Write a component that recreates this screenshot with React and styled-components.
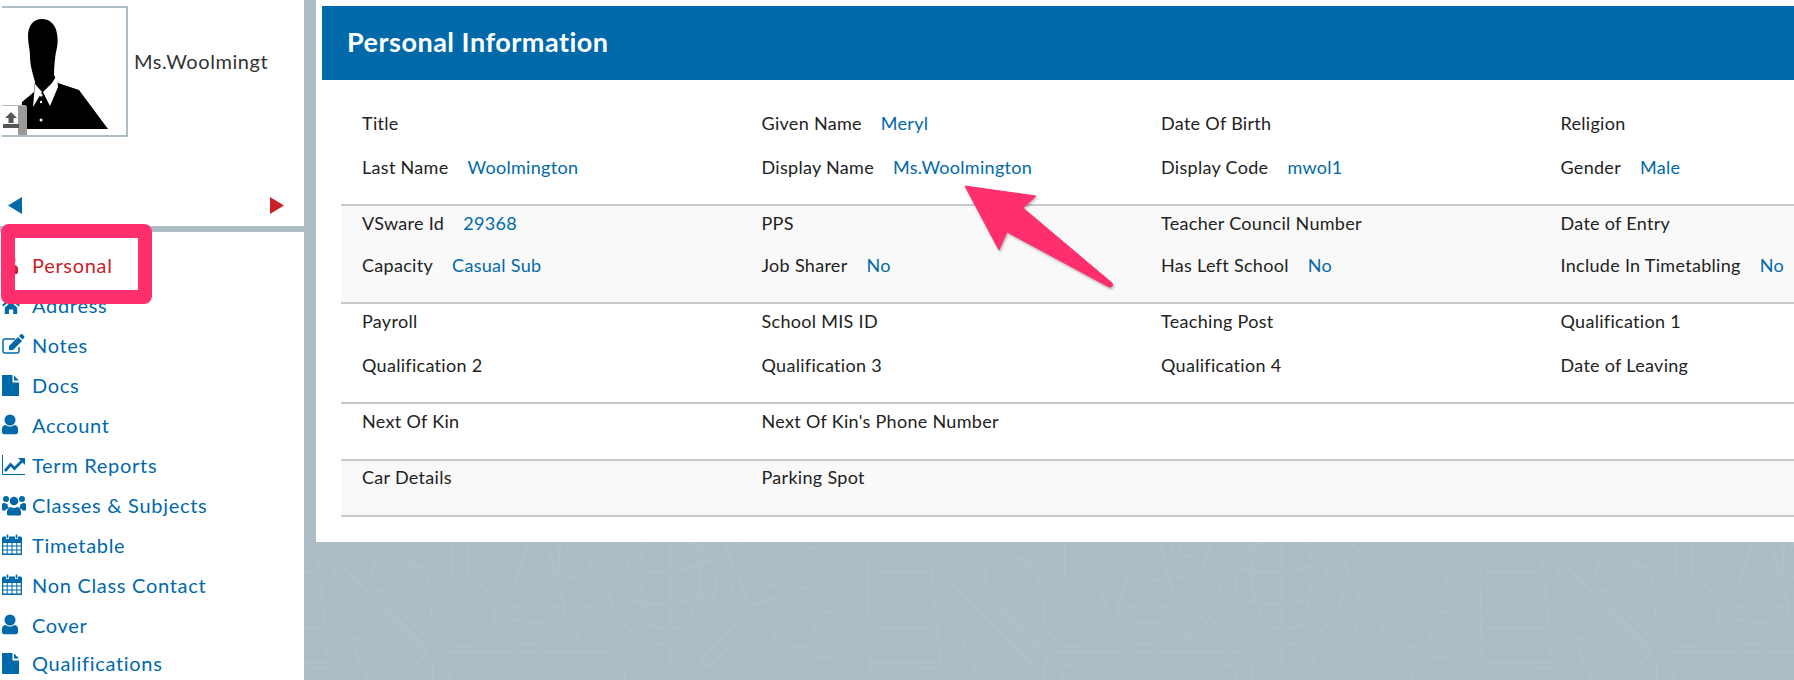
import React from 'react';
import styled, { createGlobalStyle } from 'styled-components';

const BLUE = '#0069aa';
const RED = '#cc2027';
const PINK = '#ff2e6c';
const SLATE = '#aebdc5';

// faint school doodles behind the page, one tile is 612px wide
const doodles = `
<svg xmlns='http://www.w3.org/2000/svg' width='612' height='680'>
<g transform='translate(-240 0)' fill='none' stroke='#fff' stroke-opacity='.04' stroke-width='2' stroke-linejoin='round'>
<path d='M256 557L318 557L329 668L258 670Z M262 572H318 M262 586H320 M262 600H321 M262 614H322 M262 628H323 M262 642H325 M258 663H328'/>
<path d='M333 570L344 568L426 652L418 664L340 584Z M340 584L420 664 M350 576L428 654'/>
<path d='M390 610L396 606L428 638L424 646Z'/>
<path d='M350 640L357 637L385 680H368Z'/>
<path d='M378 555C370 570 372 585 378 592H424C432 588 428 574 418 566C408 556 392 552 378 555Z M378 592L410 570 M425 560A7 7 0 1 0 425 561'/>
<path d='M431 613a32 34 0 1 0 64 0a32 34 0 1 0-64 0Z M453 540V580 M468 540V580 M448 603h6 M470 601a4 4 0 1 0 8 0a4 4 0 1 0-8 0'/>
<path d='M530 540L506 605Q504 619 520 621Q535 624 552 621Q566 619 564 605L547 540 M509 608Q535 602 562 608 M538 572h8 M540 580h8 M540 592h8'/>
<path d='M560 540L558 570Q560 578 575 578L590 568L600 540 M570 540L566 555L580 556'/>
<path d='M582 608L588 606L622 646L616 650Z M562 630a8 3 30 1 0 16 8a8 3 30 1 0-16-8'/>
<path d='M624 583a46 46 0 1 0 92 0a46 46 0 1 0-92 0Z M608 583a62 62 0 0 0 62 62a62 62 0 0 0 62-62 M645 543C635 570 640 600 655 628 M695 543C705 570 700 600 685 628 M628 568Q670 580 712 560 M630 600Q670 610 712 594 M670 537V630 M670 645V665 M650 680Q670 655 690 680'/>
<path d='M737 540L785 595L750 606L725 545 M745 558l6 3 M757 565l6 3 M755 578l6 3 M768 584l6 3'/>
<path d='M700 660L738 622L746 628L708 668Z M715 680L745 640L750 646L730 680Z'/>
<path d='M770 625C775 610 800 608 812 622L820 640C810 648 790 650 776 640Z M800 680C795 665 820 650 840 660C860 670 860 680 860 680'/>
<path d='M808 555C804 548 812 545 816 550L834 576C838 584 830 586 826 582Z M798 594C796 588 804 586 808 589L836 606C840 612 832 614 826 612Z'/>
<path d='M433 680V665Q433 652 450 652H620Q640 652 640 668V680 M450 680V672Q450 664 462 664H610Q625 664 625 676V680 M516 652V644H542V652'/>
</g></svg>`;

const GlobalStyle = createGlobalStyle`
  html, body {
    margin: 0;
    padding: 0;
    height: 680px;
    overflow: hidden;
    background: ${SLATE};
  }
  body {
    font-family: "Lato", "Open Sans", sans-serif;
  }
`;

const Page = styled.div`
  position: relative;
  display: flex;
  align-items: flex-start;
  width: 1794px;
  height: 680px;
  overflow: hidden;
  background-color: ${SLATE};
  background-image: url("data:image/svg+xml,${encodeURIComponent(doodles)}");
  background-position: 240px 0;
  background-repeat: repeat-x;
`;

const Sidebar = styled.aside`
  flex: none;
  width: 304px;
  height: 680px;
  overflow: hidden;
  background: #fff;
`;

const Profile = styled.div`
  display: flex;
  align-items: center;
  padding: 6px 0 0 2px;
`;

const Avatar = styled.div`
  position: relative;
  flex: none;
  width: 124px;
  height: 127px;
  border: 2px solid ${SLATE};
  border-left: none;
`;

const UploadButton = styled.div`
  position: absolute;
  left: 0;
  bottom: 0;
  width: 25px;
  height: 29px;
  display: flex;
  align-items: center;
  border-top: 1px solid ${SLATE};
  border-top-right-radius: 3px;
  background: linear-gradient(to right, #fff 0 16px, #9a9a9a 16px);
`;

const ProfileName = styled.span`
  margin: 0 0 22px 6px;
  font-size: 20px;
  letter-spacing: 0.55px;
  color: #333;
  white-space: nowrap;
`;

const Pager = styled.div`
  display: flex;
  justify-content: space-between;
  padding: 60px 20px 0 8px;
  height: 17px;
`;

const SideRule = styled.div`
  height: 6px;
  margin-top: 12px;
  background: ${SLATE};
`;

const Nav = styled.nav`
  padding-top: 13px;
`;

const NavItem = styled.a`
  display: flex;
  align-items: center;
  height: 40px;
  padding-left: 2px;
  margin-top: ${(p) => (p.$last ? '-2px' : '0')};
  font-size: 20px;
  letter-spacing: 0.7px;
  color: ${(p) => (p.$active ? RED : BLUE)};
  white-space: nowrap;
  svg {
    flex: none;
    width: 24px;
    height: 24px;
    margin-right: 6px;
    fill: currentColor;
  }
`;

const Panel = styled.main`
  flex: none;
  width: 1478px;
  margin-left: 12px;
  padding: 6px 0 25px 6px;
  background: #fff;
`;

const PanelHeader = styled.header`
  display: flex;
  align-items: center;
  box-sizing: border-box;
  height: 74px;
  padding: 0 0 3px 25px;
  background: ${BLUE};
  color: #fff;
  font-size: 27px;
  font-weight: 700;
  letter-spacing: 0.5px;
`;

const Rows = styled.div`
  margin-left: 19px;
  width: 1600px;
`;

const Row = styled.section`
  display: grid;
  grid-template-columns: repeat(4, 399.5px);
  grid-auto-rows: ${(p) => p.$line}px;
  align-content: start;
  box-sizing: border-box;
  height: ${(p) => p.$height}px;
  padding-top: ${(p) => p.$pad}px;
  background: ${(p) => (p.$shade ? '#f9f9f9' : '#fff')};
  border-bottom: 2px solid #c9c9c9;
`;

const Field = styled.div`
  padding-left: 21px;
  font-size: 18px;
  line-height: 24px;
  letter-spacing: 0.3px;
  color: #222;
  white-space: nowrap;
`;

const Value = styled.span`
  margin-left: 19px;
  color: ${BLUE};
`;

const Highlight = styled.div`
  position: absolute;
  left: 1px;
  top: 224px;
  box-sizing: border-box;
  width: 151px;
  height: 80px;
  border: 14px solid ${PINK};
  border-radius: 8px;
`;

const Pointer = styled.svg`
  position: absolute;
  left: 960px;
  top: 180px;
  width: 160px;
  height: 112px;
  overflow: visible;
  filter: drop-shadow(1px 2px 1px rgba(0, 0, 0, 0.25));
`;

const navIcons = {
  user: (
    <svg viewBox="0 0 24 24">
      <circle cx="8" cy="7" r="5.5" />
      <path d="M0 16c0-3 2-4 4-4 1 1 2.400 1.600 4 1.600S11 13 12 12c2 0 4 1 4 4v3c0 1.500-1 2.200-2.200 2.200H2.200C1 21.200 0 20.500 0 19z" />
    </svg>
  ),
  home: (
    <svg viewBox="0 0 24 24">
      <path d="M9 4L0 12l1.300 1.500L9 6.800l7.700 6.700L18 12l-3.500-3V4.500h-2.800v2z" />
      <path d="M2.800 14.500L9 9l6.200 5.500V21h-4v-4.500H7V21H2.800z" />
    </svg>
  ),
  edit: (
    <svg viewBox="0 0 24 24">
      <path fill="none" stroke="currentColor" strokeWidth="1.500" d="M13 6H3.500A2 2 0 0 0 1 8v10a2 2 0 0 0 2 2h12a2 2 0 0 0 2-2v-4" />
      <path d="M7 13L16 4l4 4-9 9H7z" />
      <path d="M17 3l1.500-1.500c.6-.5 1.400-.5 2 0l1.500 1.500c.5.6.5 1.400 0 2L20.500 6.500z" />
    </svg>
  ),
  file: (
    <svg viewBox="0 0 24 24">
      <path d="M0 2h10.500v7.500H17v13.500H1a1 1 0 0 1-1-1z" />
      <path d="M12 2.500l5 5h-5z" />
    </svg>
  ),
  chart: (
    <svg viewBox="0 0 24 24">
      <path fill="none" stroke="currentColor" strokeWidth="1" d="M.5 2v19.500H23" />
      <path fill="none" stroke="currentColor" strokeWidth="2.800" d="M3 18l5.500-6.500 4 4L20 8" />
      <path d="M16 5h7v7z" />
    </svg>
  ),
  users: (
    <svg viewBox="0 0 24 24">
      <circle cx="4" cy="6" r="3" />
      <circle cx="20" cy="6" r="3" />
      <circle cx="12" cy="8" r="4.300" />
      <path d="M0 11.500C0 10 1.500 10 3 10c.8.800 1.500 1 2.500 1 0 2 .6 3 1.500 4-2 .6-3 1.500-3.500 2.500H1c-.6 0-1-.4-1-1z" />
      <path d="M24 11.500c0-1.500-1.500-1.500-3-1.500-.8.800-1.500 1-2.500 1 0 2-.6 3-1.500 4 2 .6 3 1.500 3.500 2.500H23c.6 0 1-.4 1-1z" />
      <path d="M5 19c0-3 2.500-5 4-5 1.500 1.300 4.500 1.300 6 0 1.500 0 4 2 4 5v2c0 1-1 1.500-2 1.500H7c-1 0-2-.5-2-1.500z" />
    </svg>
  ),
  calendar: (
    <svg viewBox="0 0 24 24">
      <path d="M0 5a1.500 1.500 0 0 1 1.500-1.500H4v2.500h3V3.500h6v2.500h3V3.500h2.500A1.500 1.500 0 0 1 20 5v17H0zm1.300 5v2.500h3.400V10zm4.400 0v2.500h3.800V10zm4.800 0v2.500h3.800V10zm4.800 0v2.500h3.400V10zM1.300 13.500v3h3.400v-3zm4.400 0v3h3.800v-3zm4.800 0v3h3.800v-3zm4.800 0v3h3.400v-3zM1.300 17.500v3h3.400v-3zm4.400 0v3h3.800v-3zm4.800 0v3h3.800v-3zm4.800 0v3h3.400v-3z" />
      <path d="M4.700 1.500h1.600v3.800H4.700zM13.700 1.500h1.600v3.800h-1.600z" />
    </svg>
  ),
};

const navItems = [
  { label: 'Personal', icon: 'user', active: true },
  { label: 'Address', icon: 'home' },
  { label: 'Notes', icon: 'edit' },
  { label: 'Docs', icon: 'file' },
  { label: 'Account', icon: 'user' },
  { label: 'Term Reports', icon: 'chart' },
  { label: 'Classes & Subjects', icon: 'users' },
  { label: 'Timetable', icon: 'calendar' },
  { label: 'Non Class Contact', icon: 'calendar' },
  { label: 'Cover', icon: 'user' },
  { label: 'Qualifications', icon: 'file', last: true },
];

const rows = [
  {
    height: 126,
    pad: 31,
    line: 44,
    fields: [
      ['Title'], ['Given Name', 'Meryl'], ['Date Of Birth'], ['Religion'],
      ['Last Name', 'Woolmington'], ['Display Name', 'Ms.Woolmington'], ['Display Code', 'mwol1'], ['Gender', 'Male'],
    ],
  },
  {
    height: 98,
    pad: 5,
    line: 42,
    shade: true,
    fields: [
      ['VSware Id', '29368'], ['PPS'], ['Teacher Council Number'], ['Date of Entry'],
      ['Capacity', 'Casual Sub'], ['Job Sharer', 'No'], ['Has Left School', 'No'], ['Include In Timetabling', 'No'],
    ],
  },
  {
    height: 100,
    pad: 5,
    line: 44,
    fields: [
      ['Payroll'], ['School MIS ID'], ['Teaching Post'], ['Qualification 1'],
      ['Qualification 2'], ['Qualification 3'], ['Qualification 4'], ['Date of Leaving'],
    ],
  },
  { height: 57, pad: 5, line: 44, fields: [['Next Of Kin'], ["Next Of Kin's Phone Number"]] },
  { height: 56, pad: 4, line: 44, shade: true, fields: [['Car Details'], ['Parking Spot']] },
];

const Silhouette = () => (
  <svg width="124" height="127" viewBox="2 8 124 127">
    <path
      fill="#000"
      d="M42 19C33 19 28 26 28 36c0 8 2 14 2 20 0 10 3 18 5 26l-1 10-12 10-2 24v3h88L79 90l-21-7-4-8c0-9 1-17 2-23 2-8 2-12 1-18-1-9-7-15-15-15z"
    />
    <path fill="#fff" d="M57 75l1 12-8 19-7-14 9-9zM35 84l7 8-9 15z" />
    <circle cx="41" cy="95" r="1.600" fill="#fff" />
    <circle cx="41" cy="102" r="1.200" fill="#fff" />
    <circle cx="41" cy="120" r="1.500" fill="#fff" />
  </svg>
);

export default function App() {
  return (
    <Page>
      <GlobalStyle />
      <Sidebar>
        <Profile>
          <Avatar>
            <Silhouette />
            <UploadButton>
              <svg width="18" height="18" viewBox="0 0 18 18">
                <path fill="#555" d="M9 0l6 6h-3.500v5h-5V6H3zM1 12h16v4H1z" />
              </svg>
            </UploadButton>
          </Avatar>
          <ProfileName>Ms.Woolmingt</ProfileName>
        </Profile>
        <Pager>
          <svg width="14" height="17" viewBox="0 0 14 17">
            <path fill={BLUE} d="M0 8.500L14 0v17z" />
          </svg>
          <svg width="14" height="17" viewBox="0 0 14 17">
            <path fill={RED} d="M14 8.500L0 0v17z" />
          </svg>
        </Pager>
        <SideRule />
        <Nav>
          {navItems.map((item) => (
            <NavItem key={item.label} $active={item.active} $last={item.last}>
              {navIcons[item.icon]}
              {item.label}
            </NavItem>
          ))}
        </Nav>
      </Sidebar>
      <Panel>
        <PanelHeader>Personal Information</PanelHeader>
        <Rows>
          {rows.map((row, i) => (
            <Row key={i} $height={row.height} $pad={row.pad} $line={row.line} $shade={row.shade}>
              {row.fields.map(([label, value]) => (
                <Field key={label}>
                  {label}
                  {value && <Value>{value}</Value>}
                </Field>
              ))}
            </Row>
          ))}
        </Rows>
      </Panel>
      <Highlight />
      <Pointer viewBox="960 180 160 112">
        <path
          fill={PINK}
          stroke={PINK}
          strokeLinejoin="round"
          d="M965 186L1036 196L1023 208L1112 283Q1114 287 1109 287L1007 232L999 250Z"
        />
      </Pointer>
    </Page>
  );
}
